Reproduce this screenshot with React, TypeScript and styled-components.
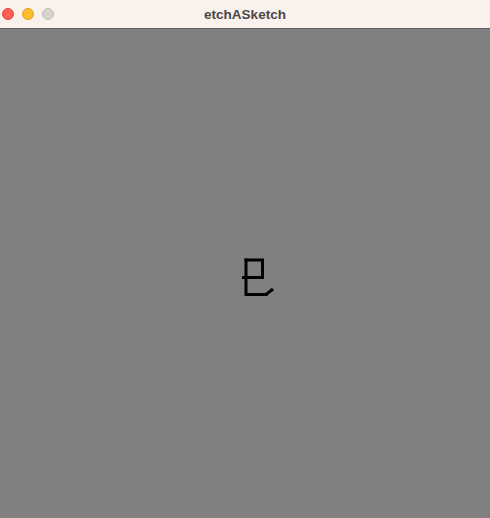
import styled, { createGlobalStyle } from "styled-components";

const Global = createGlobalStyle`
  html, body {
    margin: 0;
    padding: 0;
    height: 100%;
    background: #808080;
  }
  #root {
    height: 100%;
  }
`;

const Window = styled.div`
  display: flex;
  flex-direction: column;
  width: 490px;
  height: 518px;
`;

const TitleBar = styled.div`
  position: relative;
  height: 28px;
  flex-shrink: 0;
  display: flex;
  align-items: center;
  justify-content: center;
  background: #f9f1ec;
  border-bottom: 1px solid #5c5c5c;
`;

const Lights = styled.div`
  position: absolute;
  left: 2px;
  top: 8px;
  display: flex;
  gap: 8px;
`;

const Light = styled.span<{ $fill: string; $edge: string }>`
  width: 12px;
  height: 12px;
  border-radius: 50%;
  box-sizing: border-box;
  background: ${(p) => p.$fill};
  border: 1px solid ${(p) => p.$edge};
`;

const Title = styled.div`
  font-family: "Liberation Sans", Arial, sans-serif;
  font-weight: bold;
  font-size: 13.5px;
  color: #4b4646;
`;

const Canvas = styled.div`
  flex: 1;
  background: #808080;
`;

const Sketch = styled.svg`
  display: block;
  width: 100%;
  height: 100%;
`;

export default function App() {
  return (
    <Window>
      <Global />
      <TitleBar>
        <Lights>
          <Light $fill="#fe5f57" $edge="#e0443e" />
          <Light $fill="#febc2e" $edge="#dea123" />
          <Light $fill="#d6d2cf" $edge="#c1bdba" />
        </Lights>
        <Title>etchASketch</Title>
      </TitleBar>
      <Canvas>
        <Sketch viewBox="0 0 490 489">
          <g fill="none" stroke="#000" strokeWidth="3" strokeLinecap="square">
            <path d="M246 231 V265.5 H266" />
            <path d="M246 231 H262.5 V248.5" />
            <path d="M243.5 248.5 H262.5" />
            <path d="M266 265.5 L273 260" strokeLinecap="butt" />
          </g>
        </Sketch>
      </Canvas>
    </Window>
  );
}
